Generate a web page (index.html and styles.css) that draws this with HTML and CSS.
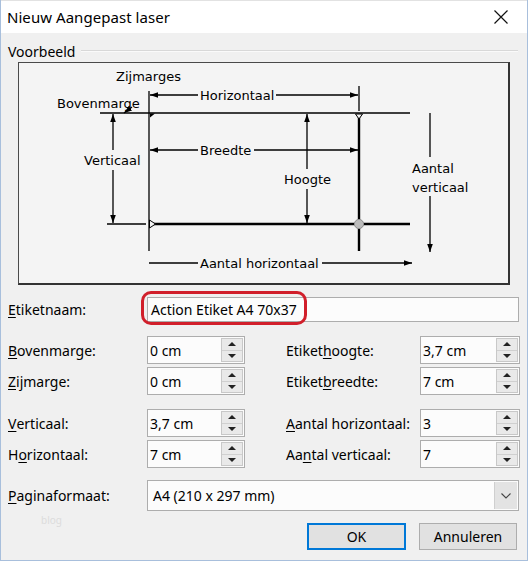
FILE: index.html
```html
<!DOCTYPE html>
<html>
<head>
<meta charset="utf-8">
<title>Nieuw Aangepast laser</title>
<link rel="stylesheet" href="styles.css">
</head>
<body>
<div class="window">
  <div class="titlebar">
    <span class="title">Nieuw Aangepast laser</span>
    <svg class="close" width="14" height="14" viewBox="0 0 14 14"><path d="M0.5 0.5L13.5 13.5M13.5 0.5L0.5 13.5" stroke="#111" stroke-width="1.2" fill="none"/></svg>
  </div>
  <div class="content">
    <div class="legend"><span>Voorbeeld</span><span class="rule"></span></div>
    <div class="preview">
      <svg class="diagram" width="489" height="220" viewBox="19 63 489 220">
        <defs>
          <marker id="ah" viewBox="0 0 8 8" refX="8" refY="4" markerWidth="8" markerHeight="8" markerUnits="userSpaceOnUse" orient="auto-start-reverse">
            <path d="M0 1.2L8 4L0 6.8Z" fill="#000"/>
          </marker>
        </defs>
        <g stroke="#000" fill="none" stroke-width="1.3">
          <line x1="100" y1="113" x2="410" y2="113"/>
          <line x1="149" y1="91" x2="149" y2="251"/>
          <line x1="107" y1="224" x2="146" y2="224"/>
          <line x1="152" y1="224" x2="410" y2="224" stroke-width="2.4"/>
          <line x1="359" y1="116" x2="359" y2="251" stroke-width="2.4"/>
          <line x1="359" y1="86" x2="359" y2="111"/>
          <line x1="150" y1="95" x2="198" y2="95" marker-start="url(#ah)"/>
          <line x1="276" y1="95" x2="358" y2="95" marker-end="url(#ah)"/>
          <line x1="150" y1="150" x2="198" y2="150" marker-start="url(#ah)"/>
          <line x1="254" y1="150" x2="358" y2="150" marker-end="url(#ah)"/>
          <line x1="307" y1="114" x2="307" y2="169" marker-start="url(#ah)"/>
          <line x1="307" y1="189" x2="307" y2="223" marker-end="url(#ah)"/>
          <line x1="113" y1="114" x2="113" y2="150" marker-start="url(#ah)"/>
          <line x1="113" y1="170" x2="113" y2="223" marker-end="url(#ah)"/>
          <line x1="430" y1="113" x2="430" y2="157"/>
          <line x1="430" y1="196" x2="430" y2="252" marker-end="url(#ah)"/>
          <line x1="149" y1="263" x2="198" y2="263"/>
          <line x1="322" y1="263" x2="412" y2="263" marker-end="url(#ah)"/>
          <line x1="132" y1="107" x2="124" y2="113" marker-end="url(#ah)"/>
        </g>
        <path d="M150 113.5L155 113.5L150 117.5Z" fill="#000"/>
        <path d="M355.5 114L362.5 114L359 119Z" fill="#f4f4f4" stroke="#000" stroke-width="1"/>
        <path d="M149.5 220L155.5 224L149.5 228Z" fill="#f4f4f4" stroke="#000" stroke-width="1"/>
        <circle cx="359" cy="224" r="4.6" fill="#bcbcbc" stroke="#8a8a8a" stroke-width="1"/>
        <g class="dtext">
          <text x="116" y="76">Zijmarges</text>
          <text x="57" y="103">Bovenmarge</text>
          <text x="200" y="95">Horizontaal</text>
          <text x="84" y="160">Verticaal</text>
          <text x="200" y="150">Breedte</text>
          <text x="284" y="179">Hoogte</text>
          <text x="412" y="168">Aantal</text>
          <text x="412" y="187">verticaal</text>
          <text x="200" y="263">Aantal horizontaal</text>
        </g>
      </svg>
    </div>

    <div class="name-row">
      <label class="lbl name-lbl"><u>E</u>tiketnaam:</label>
      <div class="field name-field">Action Etiket A4 70x37</div>
      <div class="highlight"></div>
    </div>

    <div class="grid">
      <label class="lbl"><u>B</u>ovenmarge:</label>
      <div class="spin"><span class="val">0 cm</span><span class="btns"><span class="up"></span><span class="down"></span></span></div>
      <span></span>
      <label class="lbl">Etiket<u>h</u>oogte:</label>
      <div class="spin"><span class="val">3,7 cm</span><span class="btns"><span class="up"></span><span class="down"></span></span></div>

      <label class="lbl"><u>Z</u>ijmarge:</label>
      <div class="spin"><span class="val">0 cm</span><span class="btns"><span class="up"></span><span class="down"></span></span></div>
      <span></span>
      <label class="lbl">Etiket<u>b</u>reedte:</label>
      <div class="spin"><span class="val">7 cm</span><span class="btns"><span class="up"></span><span class="down"></span></span></div>
    </div>

    <div class="grid second">
      <label class="lbl"><u>V</u>erticaal:</label>
      <div class="spin"><span class="val">3,7 cm</span><span class="btns"><span class="up"></span><span class="down"></span></span></div>
      <span></span>
      <label class="lbl"><u>A</u>antal horizontaal:</label>
      <div class="spin"><span class="val">3</span><span class="btns"><span class="up"></span><span class="down"></span></span></div>

      <label class="lbl">H<u>o</u>rizontaal:</label>
      <div class="spin"><span class="val">7 cm</span><span class="btns"><span class="up"></span><span class="down"></span></span></div>
      <span></span>
      <label class="lbl">Aa<u>n</u>tal verticaal:</label>
      <div class="spin"><span class="val">7</span><span class="btns"><span class="up"></span><span class="down"></span></span></div>
    </div>

    <div class="page-row">
      <label class="lbl name-lbl"><u>P</u>aginaformaat:</label>
      <div class="select">
        <span class="sel-val">A4 (210 x 297 mm)</span>
        <span class="sel-btn"><svg width="10" height="6" viewBox="0 0 10 6"><path d="M0.5 0.5L5 5L9.5 0.5" stroke="#444" stroke-width="1.1" fill="none"/></svg></span>
      </div>
      <span class="watermark">blog</span>
    </div>

    <div class="buttons">
      <button class="btn default">OK</button>
      <button class="btn">Annuleren</button>
    </div>
  </div>
</div>
</body>
</html>
```

FILE: styles.css
```css
html, body {
  margin: 0;
  padding: 0;
  background: #f0f0f0;
}

.window {
  width: 528px;
  height: 561px;
  box-sizing: border-box;
  background: #f0f0f0;
  border-left: 1px solid #a8bfdc;
  border-right: 1px solid #a8bfdc;
  border-bottom: 1px solid #a8bfdc;
  overflow: hidden;
  font-family: "Noto Sans", "Open Sans", sans-serif;
  font-size: 14px;
  color: #000;
}

.titlebar {
  height: 33px;
  background: #fff;
  border-top: 1px solid #e2e2e2;
  box-sizing: border-box;
  display: flex;
  align-items: center;
  justify-content: space-between;
  padding: 0 19px 0 6px;
}

.title {
  font-size: 15px;
  letter-spacing: 0.05px;
}

.close {
  display: block;
}

.content {
  padding: 0 8px 0 7px;
}

.legend {
  margin-top: 9px;
  height: 18px;
  display: flex;
  align-items: center;
  font-size: 14px;
}

.rule {
  flex: 1;
  margin-left: 6px;
  margin-right: 1px;
  border-top: 1px solid #d8d8d8;
  border-bottom: 1px solid #fafafa;
}

.preview {
  margin: 2px 0 0 10px;
  width: 492px;
  height: 223px;
  box-sizing: border-box;
  border-left: 1px solid #4a4a4a;
  border-top: 1px solid #4a4a4a;
  border-right: 2px solid #333;
  border-bottom: 2px solid #333;
  background: #f4f4f4;
}

.diagram {
  display: block;
}

.dtext text {
  font-family: "DejaVu Sans", sans-serif;
  font-size: 13px;
  fill: #000;
  dominant-baseline: central;
}

.lbl {
  display: flex;
  align-items: center;
  white-space: nowrap;
}

.lbl u {
  text-decoration-thickness: 1px;
  text-underline-offset: 2px;
}

.name-row {
  position: relative;
  margin-top: 12px;
  display: flex;
  align-items: center;
  height: 25px;
}

.name-lbl {
  width: 139px;
  flex: none;
}

.field {
  box-sizing: border-box;
  border: 1px solid #adadad;
  background: #fcfcfc;
  display: flex;
  align-items: center;
}

.name-field {
  width: 373px;
  height: 25px;
  padding-left: 3px;
}

.highlight {
  position: absolute;
  left: 133px;
  top: -6px;
  width: 166px;
  height: 34px;
  box-sizing: border-box;
  border: 3px solid #d11f2b;
  border-radius: 10px;
}

.grid {
  margin-top: 14px;
  display: grid;
  grid-template-columns: 139px 98px 41px 134px 100px;
  grid-auto-rows: 28px;
  row-gap: 3px;
}

.spin {
  box-sizing: border-box;
  border: 1px solid #adadad;
  background: #fcfcfc;
  display: flex;
  align-items: stretch;
}

.val {
  display: flex;
  align-items: center;
  padding-left: 2px;
  flex: 1;
}

.btns {
  width: 20px;
  margin: 1px 1px 1px 0;
  border: 1px solid #c8c8c8;
  background: #e9e9e9;
  display: flex;
  flex-direction: column;
}

.up, .down {
  flex: 1;
  display: flex;
  align-items: center;
  justify-content: center;
}

.up {
  border-bottom: 1px solid #d0d0d0;
}

.up::before {
  content: "";
  border-left: 4px solid transparent;
  border-right: 4px solid transparent;
  border-bottom: 4px solid #222;
}

.down::before {
  content: "";
  border-left: 4px solid transparent;
  border-right: 4px solid transparent;
  border-top: 4px solid #222;
}

.page-row {
  position: relative;
  margin-top: 12px;
  display: flex;
  align-items: center;
  height: 31px;
}

.select {
  width: 373px;
  height: 31px;
  box-sizing: border-box;
  border: 1px solid #adadad;
  background: #fcfcfc;
  display: flex;
  align-items: stretch;
}

.sel-val {
  flex: 1;
  display: flex;
  align-items: center;
  padding-left: 5px;
}

.sel-btn {
  width: 22px;
  margin: 1px 1px 1px 0;
  background: #e3e3e3;
  border-left: 1px solid #cfcfcf;
  display: flex;
  align-items: center;
  justify-content: center;
}

.watermark {
  position: absolute;
  left: 33px;
  top: 33px;
  font-size: 10px;
  color: #dcdcdc;
}

.buttons {
  margin-top: 12px;
  display: flex;
  justify-content: flex-end;
  gap: 13px;
  padding-right: 2px;
}

.btn {
  height: 27px;
  box-sizing: border-box;
  border: 1px solid #adadad;
  background: #e1e1e1;
  font-family: "Noto Sans", "Open Sans", sans-serif;
  font-size: 14px;
  color: #000;
  padding: 0;
  width: 98px;
}

.btn.default {
  width: 99px;
  border: 2px solid #0078d7;
}
```
